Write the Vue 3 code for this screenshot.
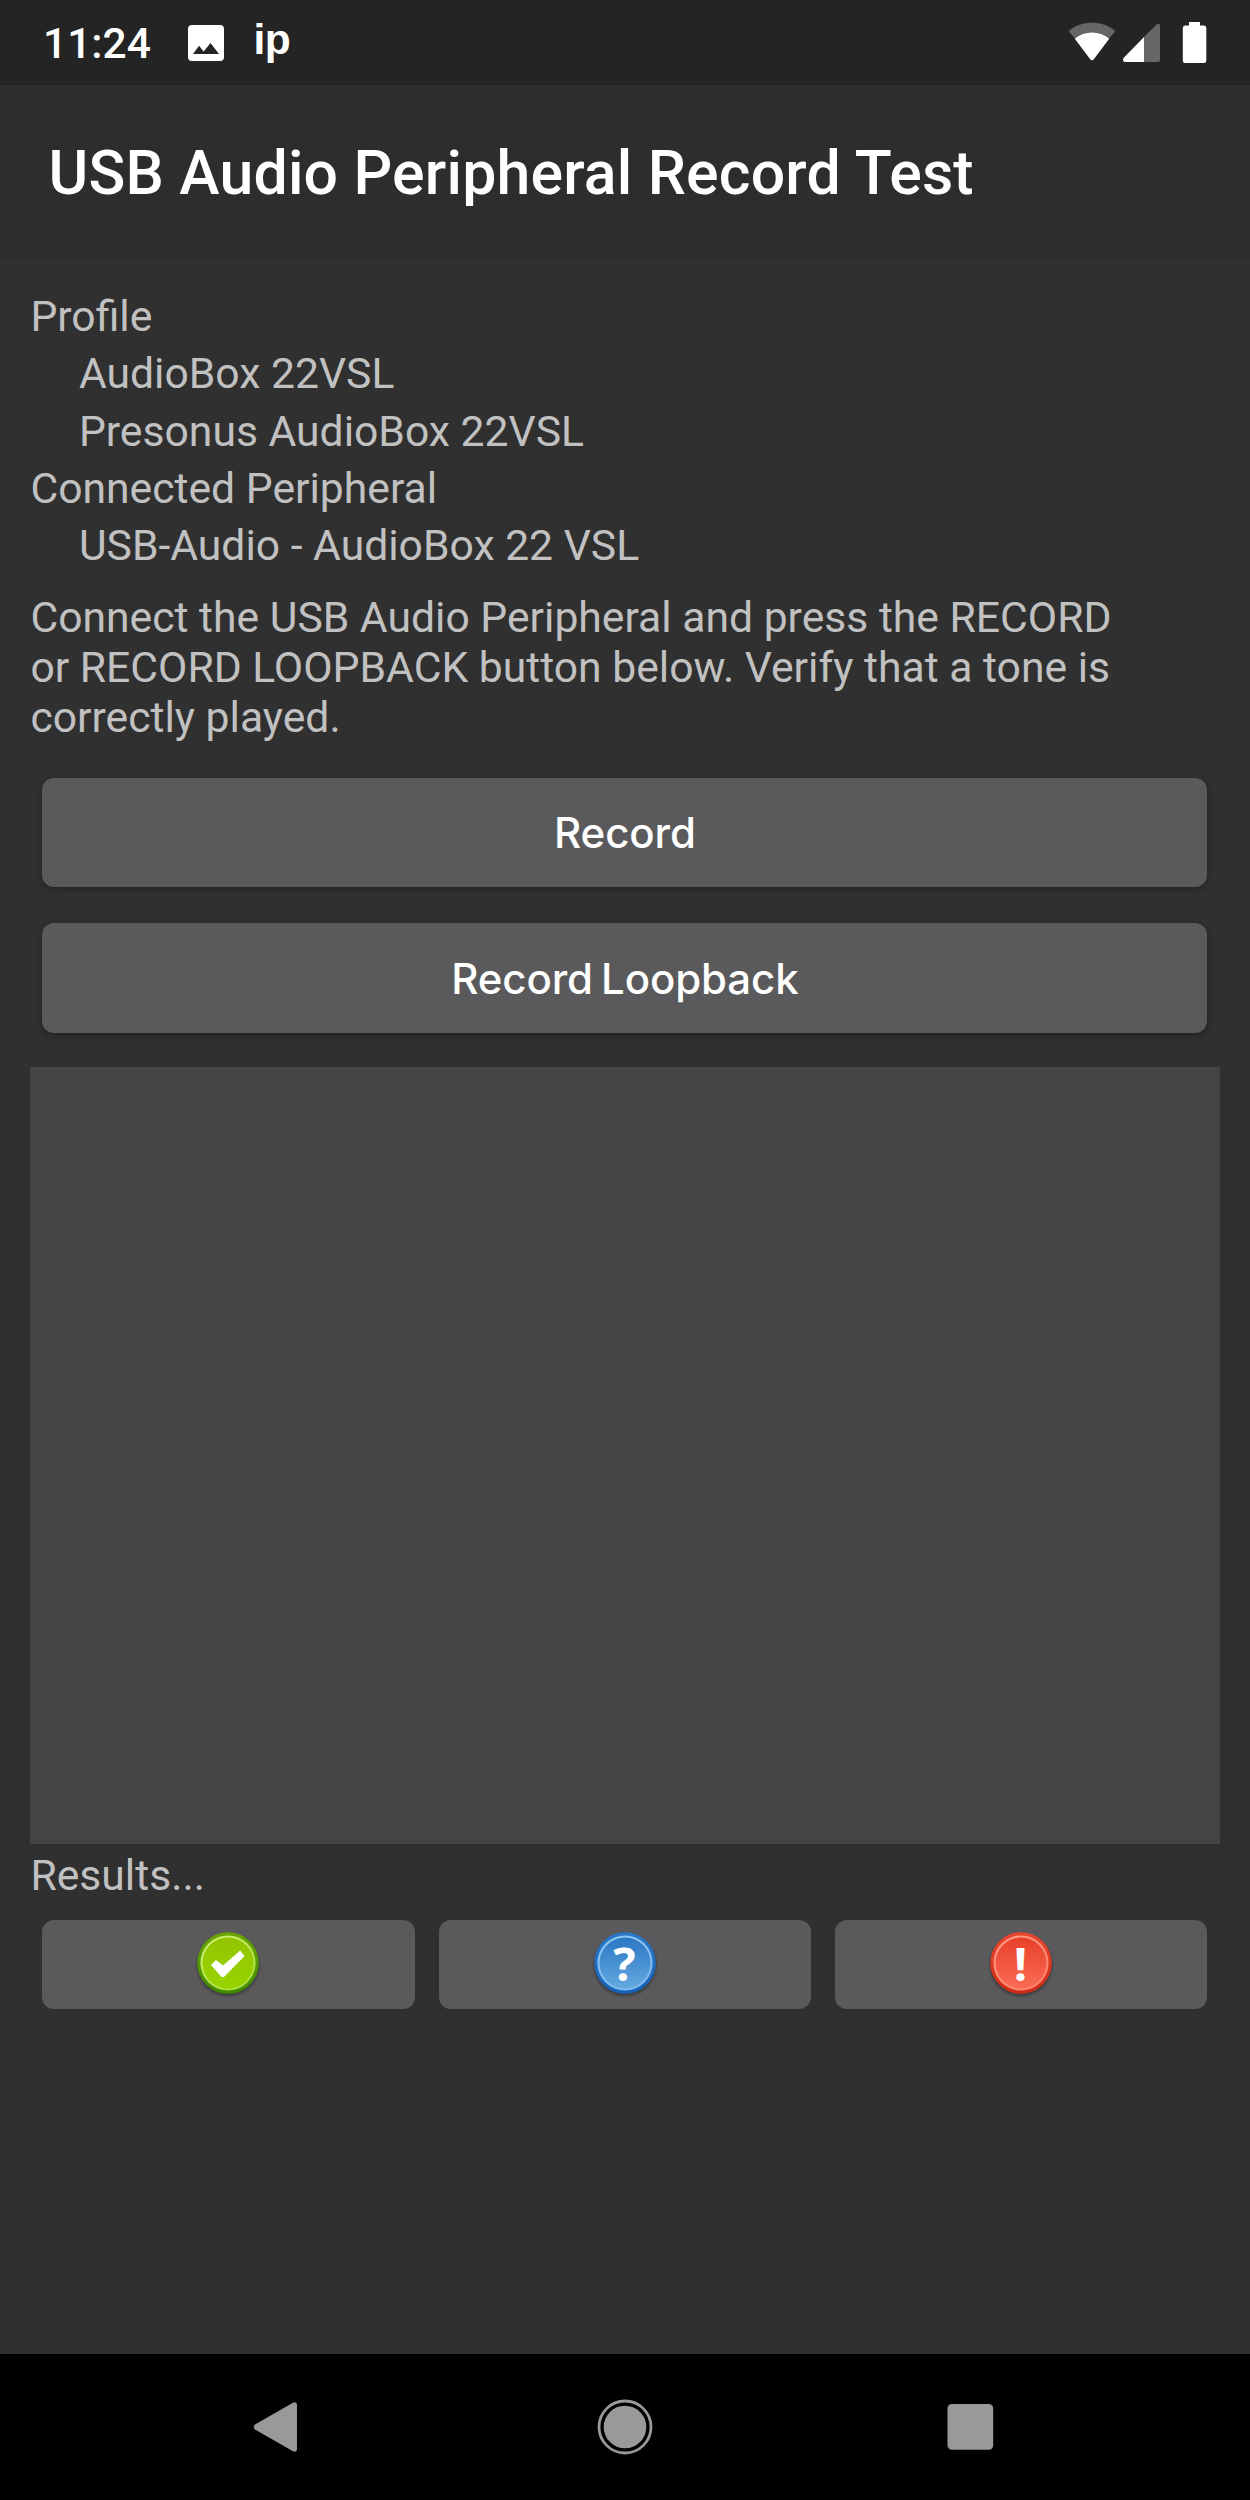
<script setup>
const details = [
  { text: 'Profile', sub: false },
  { text: 'AudioBox 22VSL', sub: true },
  { text: 'Presonus AudioBox 22VSL', sub: true },
  { text: 'Connected Peripheral', sub: false },
  { text: 'USB-Audio - AudioBox 22 VSL', sub: true },
]
const instructions = [
  'Connect the USB Audio Peripheral and press the RECORD',
  'or RECORD LOOPBACK button below. Verify that a tone is',
  'correctly played.',
]
const verdicts = [
  { id: 'pass', label: 'Pass', rim: ['#6aa800', '#3f8a00'], ring: ['#d4f07c', '#a8dc38'], face: ['#93c400', '#98d400'] },
  { id: 'info', label: 'Info', glyph: '?', rim: ['#2a78c8', '#1560b8'], ring: ['#92c8f4', '#7cb8ee'], face: ['#2a78c4', '#65a8e0'] },
  { id: 'fail', label: 'Fail', glyph: '!', rim: ['#e8462c', '#cc2a14'], ring: ['#ff9c86', '#ff826c'], face: ['#e8402a', '#fa6c54'] },
]
</script>

<template>
  <div class="screen">
    <header class="status">
      <span class="clock">11:24</span>
      <svg class="photo" width="36" height="36" viewBox="0 0 36 36">
        <path fill="#fff" fill-rule="evenodd" d="M4 0H32Q36 0 36 4V32Q36 36 32 36H4Q0 36 0 32V4Q0 0 4 0ZM5 29H31L22.5 18L15.7 26.5L11 20.8Z" />
      </svg>
      <span class="ip">ip</span>
      <svg class="signals" width="140" height="44" viewBox="0 0 140 44">
        <path fill="#666" d="M1.5 12.2Q0.6 11 1.8 10C15 0.4 33 0.4 46.2 10Q47.4 11 46.5 12.2L41 18.5L24 14L7 18.5Z" />
        <path fill="#fff" d="M6.8 18.7C16.5 10.500 31.500 10.500 41.200 18.700L26 39Q24 41.500 22 39Z" />
        <path fill="#666" d="M76 17L88.500 4.600Q92 2.500 92 6V40Q92 42 90 42H76Z" />
        <path fill="#fff" d="M76 17V42H57Q54 41.500 55.500 38Z" />
        <path fill="#fff" d="M121 2H132V5.500H136Q138.300 5.500 138.300 8V40.500Q138.300 43 136 43H117Q114.800 43 114.800 40.500V8Q114.800 5.500 117 5.500H121Z" />
      </svg>
    </header>

    <div class="appbar"><h1>USB Audio Peripheral Record Test</h1></div>

    <main class="content">
      <div class="details">
        <div v-for="row in details" :key="row.text" class="row" :class="{ sub: row.sub }">{{ row.text }}</div>
      </div>
      <p class="instructions">
        <span v-for="line in instructions" :key="line">{{ line }}</span>
      </p>
      <div class="actions">
        <button class="btn record"><span>Record</span></button>
        <button class="btn loopback"><span>Record Loopback</span></button>
      </div>
      <div class="panel"></div>
      <div class="results">Results...</div>
      <div class="verdicts">
        <button v-for="v in verdicts" :key="v.id" class="verdict" :aria-label="v.label">
          <svg width="72" height="72" viewBox="0 0 72 72" :class="v.id">
            <defs>
              <linearGradient :id="v.id + '-rim'" x2="0" y2="1">
                <stop offset="0" :stop-color="v.rim[0]" /><stop offset="1" :stop-color="v.rim[1]" />
              </linearGradient>
              <linearGradient :id="v.id + '-ring'" x2=".6" y2="1">
                <stop offset="0" :stop-color="v.ring[0]" /><stop offset="1" :stop-color="v.ring[1]" />
              </linearGradient>
              <linearGradient :id="v.id + '-face'" x2="0" y2="1">
                <stop offset="0" :stop-color="v.face[0]" /><stop offset="1" :stop-color="v.face[1]" />
              </linearGradient>
              <radialGradient :id="v.id + '-shade'">
                <stop offset=".84" stop-color="#222" stop-opacity=".6" /><stop offset="1" stop-color="#222" stop-opacity="0" />
              </radialGradient>
            </defs>
            <circle cx="36" cy="38" r="33.500" :fill="`url(#${v.id}-shade)`" />
            <circle cx="36" cy="36" r="30.800" :fill="`url(#${v.id}-rim)`" />
            <circle cx="36" cy="36" r="27.600" :fill="`url(#${v.id}-ring)`" />
            <circle cx="36" cy="36" r="25.500" :fill="`url(#${v.id}-face)`" />
            <path v-if="v.id === 'pass'" fill="#fff" d="M19 38L24 33L31 38.500L48.200 23.500L52.600 29L32 50H29.500Z" />
            <text v-else x="35.500" y="54" text-anchor="middle" fill="#fff">{{ v.glyph }}</text>
          </svg>
        </button>
      </div>
    </main>

    <nav class="nav">
      <svg width="1250" height="146" viewBox="0 0 1250 146">
        <path fill="#999" d="M255 70.500L292.500 49Q297 47 297 51V95Q297 99 292.500 97L255 75.500Q252.500 73 255 70.500Z" />
        <circle cx="625" cy="73" r="26" fill="none" stroke="#999" stroke-width="2.800" />
        <circle cx="625" cy="73" r="21.300" fill="#999" />
        <rect x="947.500" y="50" width="45.700" height="45.700" rx="4.500" fill="#999" />
      </svg>
    </nav>
  </div>
</template>

<style>
html, body { margin: 0; background: #303030; }
</style>

<style scoped>
.screen {
  width: 1250px;
  height: 2500px;
  display: flex;
  flex-direction: column;
  overflow: hidden;
  background: #303030;
  color: #c1c1c1;
  font-family: Roboto, "Liberation Sans", sans-serif;
  font-size: 42.67px;
  line-height: 49.8px;
}
.status {
  box-sizing: border-box;
  height: 85px;
  flex: none;
  display: flex;
  align-items: flex-start;
  background: #242424;
  color: #fff;
  padding-left: 43px;
}
.clock { width: 145px; margin-top: 19px; font-weight: 500; font-size: 42.500px; }
.photo { margin-top: 25px; }
.ip { margin: 15px 0 0 29.500px; font-family: "Liberation Sans", sans-serif; font-weight: 700; font-size: 42.500px; letter-spacing: -.5px; }
.signals { margin: 20px 42px 0 auto; }
.appbar {
  box-sizing: border-box;
  height: 171px;
  flex: none;
  padding: 53px 0 0 48.600px;
  background: #2d2d2d;
  box-shadow: 0 1px 3px rgba(0, 0, 0, .12);
}
h1 { margin: 0; color: #fff; font-weight: 500; font-size: 60.760px; line-height: 71.200px; letter-spacing: .19px; white-space: nowrap; }
.content { flex: 1; display: flex; flex-direction: column; padding: 32px 30px 0; }
.details, .instructions, .results { text-indent: .4px; }
.row { height: 57.300px; line-height: 57.300px; }
.sub { padding-left: 48.500px; }
.instructions { margin: 18.800px 0 0; display: flex; flex-direction: column; white-space: nowrap; }
.actions { display: flex; flex-direction: column; gap: 36.500px; margin: 34.900px 12.600px 0 12.400px; }
button { border: 0; margin: 0; padding: 0; background: #5a5a5c; border-radius: 12px; }
.btn {
  height: 109.400px;
  padding-top: 1px;
  color: #fff;
  font-family: Inter, sans-serif;
  font-weight: 500;
  font-size: 42px;
  line-height: 50px;
  word-spacing: -3px;
  letter-spacing: -.1px;
  box-shadow: 0 2px 6px rgba(0, 0, 0, .3);
}
.panel { height: 777.500px; margin-top: 33.700px; background: #444; }
.results { margin-top: 6.500px; }
.verdicts { display: flex; gap: 24.300px; margin: 19.500px 12.600px 0 12.400px; }
.verdict { flex: 1; height: 89.500px; display: flex; justify-content: center; align-items: center; }
.verdict svg { display: block; margin-top: -3px; }
.verdict text { font: 700 47px "Open Sans", sans-serif; }
.nav { height: 146px; flex: none; background: #000; }
.nav svg { display: block; }
</style>
